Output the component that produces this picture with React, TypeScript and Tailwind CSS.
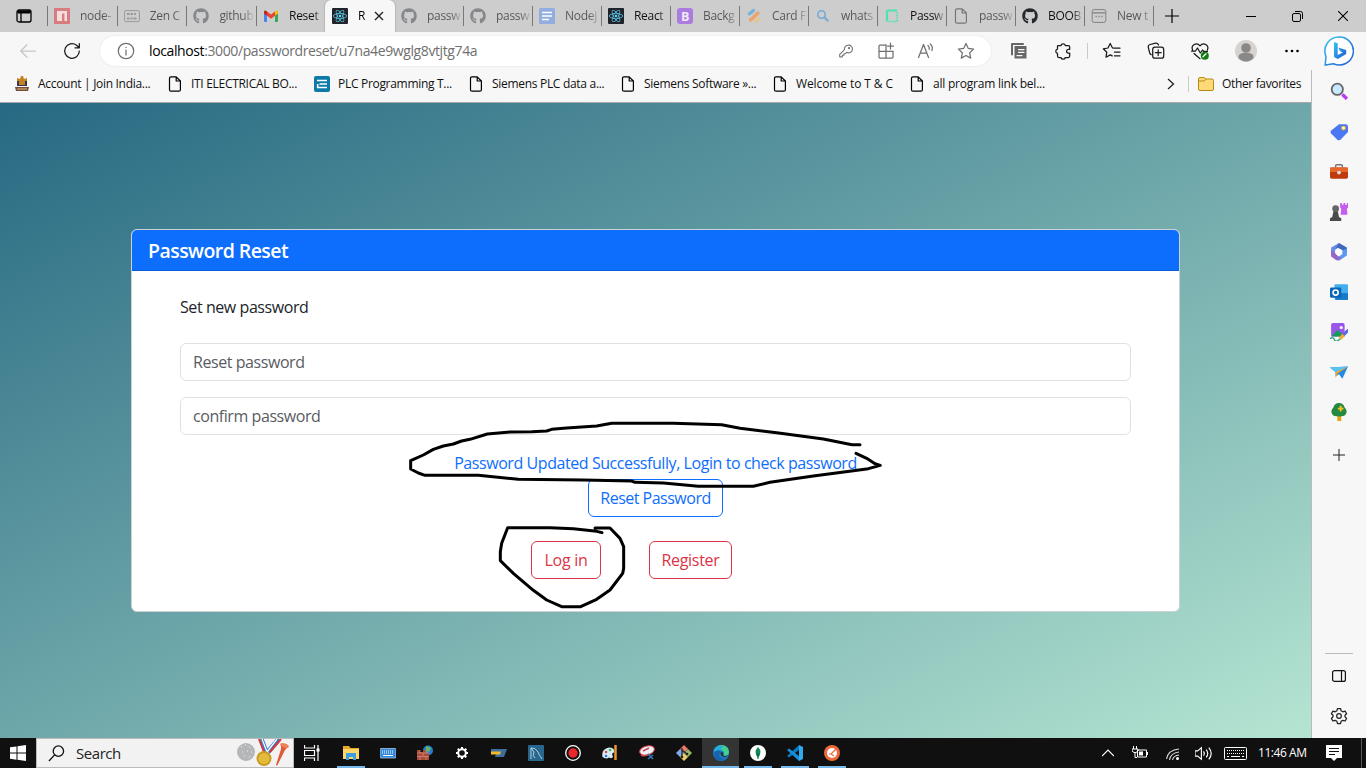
import type { ReactNode } from "react";
import { FaGithub, FaReact } from "react-icons/fa";

type P = { children?: ReactNode; className?: string };

const Line = ({ children, className = "" }: P) => (
  <svg viewBox="0 0 20 20" fill="none" stroke="currentColor" strokeWidth="1.25" strokeLinecap="round" strokeLinejoin="round" className={`h-5 w-5 shrink-0 ${className}`}>
    {children}
  </svg>
);

const Art = ({ children, className = "h-4 w-4" }: P) => (
  <svg viewBox="0 0 16 16" className={`shrink-0 ${className}`}>{children}</svg>
);

const Page = ({ className = "text-black" }: P) => (
  <svg viewBox="0 0 14 16" fill="none" stroke="currentColor" strokeWidth="1.2" strokeLinejoin="round" className={`h-4 w-3.5 shrink-0 ${className}`}>
    <path d="M3 .8h5.2l4.2 4.2v8.7a1.5 1.5 0 0 1-1.5 1.5H3a1.5 1.5 0 0 1-1.5-1.5V2.3A1.5 1.5 0 0 1 3 .8zM8.2.8V5h4.2" />
  </svg>
);

const ReactIcon = () => (
  <span className="flex h-4 w-4 shrink-0 items-center justify-center rounded-[1px] bg-[#20232a] text-[#61dafb]"><FaReact size={14} /></span>
);

const tabs: { t: string; icon: ReactNode; dark?: boolean; active?: boolean }[] = [
  { t: "node-", icon: <Art><path fill="#d77c80" d="M0 0h16v16H0z" /><path fill="#f5dcdd" d="M3 3h10v10h-2.6V5.6H8V13H3z" /></Art> },
  { t: "Zen C", icon: <Art><rect x=".6" y="2.6" width="14.8" height="11" rx="1" fill="none" stroke="#999" /><path d="M3 6h2.500M6.500 6H9M10 6h2M3 10.500h2.500M6.500 10.500h2M9.500 10.500h3" stroke="#999" strokeWidth="2" /></Art> },
  { t: "github", icon: <FaGithub size={16} className="text-[#85878a]" /> },
  { t: "Reset", dark: true, icon: <Art><path fill="#4285f4" d="M1 3.500 4 6v8H2a1 1 0 0 1-1-1z" /><path fill="#34a853" d="m15 3.500-3 2.500v8h2a1 1 0 0 0 1-1z" /><path fill="#ea4335" d="M4 3.400 8 6.500l4-3.100v4.300L8 10.800 4 7.700z" /><path fill="#c5221f" d="M1 4c0-1.700 1.500-2 3-.6v4.300L1 5.500z" /><path fill="#fbbc04" d="M15 4c0-1.700-1.500-2-3-.6v4.300l3-2.200z" /></Art> },
  { t: "R", dark: true, active: true, icon: <ReactIcon /> },
  { t: "passw", icon: <FaGithub size={16} className="text-[#85878a]" /> },
  { t: "passw", icon: <FaGithub size={16} className="text-[#85878a]" /> },
  { t: "Nodej", icon: <Art><rect width="16" height="16" rx="1.500" fill="#92ade0" /><path d="M3 4.500h10M3 8h10M3 11.500h7" stroke="#fff" strokeWidth="1.600" /></Art> },
  { t: "React", dark: true, icon: <ReactIcon /> },
  { t: "Backg", icon: <Art><rect width="16" height="16" rx="3" fill="#ab7be0" /><text x="4" y="12.500" fontSize="12.500" fontWeight="700" fontFamily="Open Sans, sans-serif" fill="#f1e8fb">B</text></Art> },
  { t: "Card F", icon: <Art><g strokeWidth="3.400" strokeLinecap="round"><path d="M3.500 5.800 7.500 2.500" stroke="#75b2e0" /><path d="m4.500 12 7.500-7" stroke="#eda36f" /><path d="m9.500 13.200 2.700-2.500" stroke="#eac58b" /></g></Art> },
  { t: "whats", icon: <Art><circle cx="6.500" cy="6.500" r="3.700" fill="none" stroke="#75a9d4" strokeWidth="1.600" /><path d="m9.300 9.300 4 4" stroke="#75a9d4" strokeWidth="2" /></Art> },
  { t: "Passw", dark: true, icon: <Art><path d="M3 13.500V4q0-1.500 1.500-1.500H13" fill="none" stroke="#4be3b2" strokeWidth="2.200" /><path d="M13.200 4v9.500H4" fill="none" stroke="#4be3b2" strokeWidth="1.600" strokeDasharray="1.600 1" /></Art> },
  { t: "passw", icon: <span className="flex w-4 justify-center"><Page className="text-[#777]" /></span> },
  { t: "BOOB", dark: true, icon: <FaGithub size={16} className="text-[#24292f]" /> },
  { t: "New t", icon: <Art><rect x="1.200" y="1.600" width="13.600" height="12.800" rx="2" fill="none" stroke="#808080" /><path d="M1.500 4.800h13M4.500 8.500h1.300M7.400 8.500h1.300M10.300 8.500h1.300" stroke="#808080" strokeWidth="1.300" /></Art> },
];

function Tab({ t, icon, dark, active }: (typeof tabs)[number]) {
  if (active)
    return (
      <div className="flex h-8 w-[70px] shrink-0 items-center rounded-t-md bg-[#f7f7f7] pl-[7px] shadow-[0_0_2px_#888]">
        {icon}
        <span className="ml-2.5 w-2.5 whitespace-nowrap bg-gradient-to-r from-black from-50% to-[#ddd] bg-clip-text text-xs text-transparent">{t}</span>
        <svg viewBox="0 0 10 10" className="ml-[6px] h-2.5 w-2.5" stroke="#222" strokeWidth="1.400"><path d="m1 1 8 8M9 1 1 9" /></svg>
      </div>
    );
  return (
    <div className="flex h-8 w-[69px] shrink-0 items-center pl-1.5">
      {icon}
      <span className={`ml-2.5 w-9 whitespace-nowrap bg-gradient-to-r from-65% to-[#cdcdcd] bg-clip-text text-xs tracking-[-0.3px] text-transparent ${dark ? "from-[#111]" : "from-[#555]"}`}>{t}</span>
      <span className="ml-auto h-5 w-px shrink-0 bg-[#777]" />
    </div>
  );
}

function TabStrip() {
  return (
    <div className="flex h-8 shrink-0 items-center bg-[#cdcdcd]">
      <div className="flex w-[47px] justify-center">
        <Art><path fill="none" stroke="#000" strokeWidth="1.300" d="M3 2h10a2 2 0 0 1 2 2v8a2 2 0 0 1-2 2H3a2 2 0 0 1-2-2V4a2 2 0 0 1 2-2zM5 5v9" /><path d="M1.500 2.500h13v3h-13z" /></Art>
      </div>
      <span className="h-5 w-px bg-[#777]" />
      <div className="flex w-[277px]">{tabs.slice(0, 4).map((x, i) => <div key={i} className={i < 3 ? "w-[69.700px] [&>div]:w-[69.700px]" : "w-[68px] overflow-hidden"}><Tab {...x} /></div>)}</div>
      <Tab {...tabs[4]} />
      <div className="flex">{tabs.slice(5).map((x, i) => <Tab key={i} {...x} />)}</div>
      <svg viewBox="0 0 14 14" className="ml-[11px] h-3.5 w-3.5" stroke="#000" strokeWidth="1.200"><path d="M7 0v14M0 7h14" /></svg>
      <div className="ml-auto flex">
        <span className="flex w-[46px] items-center justify-center"><svg viewBox="0 0 10 10" className="h-2.5 w-2.5" stroke="#000"><path d="M0 5.500h10" /></svg></span>
        <span className="flex w-[46px] items-center justify-center"><svg viewBox="0 0 11 11" className="h-[11px] w-[11px]" fill="none" stroke="#000"><rect x=".5" y="2.500" width="8" height="8" rx="1.500" /><path d="M3 .5h5.500a2 2 0 0 1 2 2V8" /></svg></span>
        <span className="flex w-[46px] items-center justify-center"><svg viewBox="0 0 10 10" className="h-2.5 w-2.5" stroke="#000" strokeWidth="1.100"><path d="m0 0 10 10M10 0 0 10" /></svg></span>
      </div>
    </div>
  );
}

const Cell = ({ children, className = "w-11" }: P) => <span className={`flex shrink-0 items-center justify-center ${className}`}>{children}</span>;

function Toolbar() {
  return (
    <div className="flex h-[38px] shrink-0 items-center bg-[#f7f7f7] text-[#1a1a1a]">
      <Cell className="w-14"><Line className="text-[#c6c6c6]"><path d="M17.500 10H2.700M9 3.700 2.700 10 9 16.300" /></Line></Cell>
      <Cell className="ml-[-6px] w-11"><Line><path d="M17.300 10A7.300 7.300 0 1 1 14.500 4.200L17 6.500M17.300 2.500v4.300H13" /></Line></Cell>
      <div className="ml-[6px] flex h-[30px] w-[891px] items-center rounded-full bg-white pr-[5px] text-[#707070] shadow-[0_0_2px_#ddd]">
        <Line className="ml-4"><circle cx="10" cy="10" r="7.700" /><path d="M10 9v5M10 6.300v.2" /></Line>
        <span className="ml-[13px] text-sm tracking-[-0.39px] text-[#6f6f6f]"><span className="text-black">localhost</span>:3000/passwordreset/u7na4e9wglg8vtjtg74a</span>
        <div className="ml-auto flex">
          <Cell className="w-10"><Line className="!h-[18px] !w-[18px] text-[#777]"><path d="M12.300 3.500a4.300 4.300 0 1 1-1.500 8L9.300 13H7.700v1.700H6v1.800H3v-2.800l5.300-5.300a4.300 4.300 0 0 1 4-4.900z" /><circle cx="13.400" cy="6.800" r=".7" /></Line></Cell>
          <Cell className="w-10"><Line><path d="M10 4H4a1 1 0 0 0-1 1v11a1 1 0 0 0 1 1h12a1 1 0 0 0 1-1v-6M10 3.500V17M3 10.300h14M14.500 2v6M11.500 5h6" /></Line></Cell>
          <Cell className="w-10"><Line><path d="m2.500 16.500 5-13 5 13M4.200 12h6.600M12 4.500c1.200 1 1.500 2.200 1.200 3.800M14.300 3c2 1.700 2.400 4 1.600 6.500" /></Line></Cell>
          <Cell className="w-10"><Line><path d="m10 2.500 2.300 4.900 5.300.7-3.900 3.700 1 5.300-4.700-2.600-4.700 2.600 1-5.300-3.900-3.700 5.300-.7z" /></Line></Cell>
        </div>
      </div>
      <Cell className="ml-1.5 w-11"><Line className="text-[#666]"><path d="M3 13.500V3h11" strokeWidth="2" /><path d="M5.500 5h12v12.500h-12z" fill="currentColor" stroke="none" /><path d="M9.500 8.500H15M9.500 11.300H15M8 14.500h5" stroke="#f7f7f7" /></Line></Cell>
      <Cell><Line><path d="M5 4.500h3a2.200 2.200 0 0 1 4.300 0h3a1.400 1.400 0 0 1 1.400 1.400v2.400h-1.200a1.900 1.900 0 0 0 0 3.800h1.200v3a1.400 1.400 0 0 1-1.400 1.400h-3a2.200 2.200 0 0 1-4.300 0H5.900a1.400 1.400 0 0 1-1.400-1.400v-2.700a2.200 2.200 0 0 1 0-4.300V5A.5.500 0 0 1 5 4.500z" /></Line></Cell>
      <span className="ml-[2px] mr-[2px] h-4 w-px bg-[#cacaca]" />
      <Cell><Line><path d="M12 7.200 10.500 7 8.200 2.500 6 7l-4.700.8 3.500 3.400-.8 5 4.200-2.300 2 1M11.500 7.200H18M12.500 11H18M12.500 14.800H18" /></Line></Cell>
      <Cell><Line><path d="M5.200 13.700a2.400 2.400 0 0 1-1.500-1.800L2.300 6.500a2.400 2.400 0 0 1 1.800-3l5.500-1.300a2.400 2.400 0 0 1 2.900 1.800" /><rect x="6.700" y="6.200" width="11" height="11" rx="2.300" /><path d="M12.200 8.800v5.800M9.300 11.700h5.800" /></Line></Cell>
      <Cell><Line><path d="M2.600 9C.5 4.400 6.500.4 10 4.800 13.500.4 19.500 4.400 17.400 9M1.500 10h4l2-3 2.800 5L12.500 9l1 1.300h4M4 12.500l6 5.200" /><circle cx="14.800" cy="14.700" r="4" fill="#107c10" stroke="none" /><path d="m13 15.800 3-3" stroke="#fff" /></Line></Cell>
      <Cell className="ml-0.5 w-11"><svg viewBox="0 0 22 22" className="h-[22px] w-[22px]"><circle cx="11" cy="11" r="11" fill="#d5d2cf" /><circle cx="11" cy="8" r="4.800" fill="#8a8886" /><path d="M3.500 18c0-5 3.500-5 7.500-5s7.500 0 7.500 5c-4 4.500-11 4.500-15 0z" fill="#8a8886" /></svg></Cell>
      <Cell className="ml-0.5 w-11"><svg viewBox="0 0 14 4" className="h-1 w-3.5"><circle cx="1.500" cy="2" r="1.300" /><circle cx="7" cy="2" r="1.300" /><circle cx="12.500" cy="2" r="1.300" /></svg></Cell>
      <Cell className="ml-[5px] w-10">
        <svg viewBox="0 0 30 30" className="h-[30px] w-[30px]">
          <defs><linearGradient id="bing" x1="0" y1="0" x2="1" y2="1"><stop stopColor="#2fc5f2" /><stop offset="1" stopColor="#2458d3" /></linearGradient></defs>
          <path d="M15 1a14 14 0 1 1-5.500 26.700L1.200 29l.8-8.500A14 14 0 0 1 15 1z" fill="#fff" stroke="url(#bing)" strokeWidth="1.500" />
          <path d="m10 6 3.700 1.300v11.800l5-2.700-2.800-1.300-1.500-3.700 7.800 2.700v3.800L13.800 23 10 21z" fill="url(#bing)" />
        </svg>
      </Cell>
    </div>
  );
}

const Bookmark = ({ children, icon, w }: { children: ReactNode; icon?: ReactNode; w: string }) => (
  <div className={`flex shrink-0 items-center ${w}`}>
    <span className="flex w-4 justify-center">{icon ?? <Page />}</span>
    <span className="ml-2 whitespace-nowrap">{children}</span>
  </div>
);

function Bookmarks() {
  return (
    <div className="flex h-[33px] shrink-0 items-center border-b border-[#aaa] bg-[#f7f7f7] pb-1 pl-3.5 text-xs tracking-[-0.3px] text-[#111]">
      <Bookmark w="w-[153px]" icon={<Art><path fill="#c1841f" d="M7 0h2l1 3 3-1v4l-2 4H5L3 6V2l3 1z" /><path fill="#3a315e" d="M3 5h2v4h6V5h2v5H3z" /><path fill="#74503a" d="M1 11h14l-1 4H2z" /><path d="M3 13h10" stroke="#e2b46e" /></Art>}>Account | Join India...</Bookmark>
      <Bookmark w="w-[147px]">ITI ELECTRICAL BO...</Bookmark>
      <Bookmark w="w-[154px]" icon={<Art><rect width="16" height="16" rx="2" fill="#0c7ba8" /><path d="M3 4.500h10M5.500 8H13M3 11.500h10M3.700 8v4" stroke="#fff" strokeWidth="1.600" /></Art>}>PLC Programming T...</Bookmark>
      <Bookmark w="w-[152px]">Siemens PLC data a...</Bookmark>
      <Bookmark w="w-[152px]">Siemens Software »...</Bookmark>
      <Bookmark w="w-[137px]"><span className="tracking-[-0.1px]">Welcome to T &amp; C</span></Bookmark>
      <Bookmark w="w-[140px]"><span className="tracking-[-0.22px]">all program link bel...</span></Bookmark>
      <svg viewBox="0 0 8 12" className="ml-auto h-3 w-2" fill="none" stroke="#222" strokeWidth="1.300"><path d="m1 1 5.500 5L1 11" /></svg>
      <span className="ml-[13px] h-4 w-px bg-[#ccc]" />
      <Art className="ml-[9px] h-4 w-4"><path fill="#ffd978" stroke="#b58a17" d="M.5 3A1.500 1.500 0 0 1 2 1.500h4L8 3h6A1.500 1.500 0 0 1 15.500 4.500v8.500a1.500 1.500 0 0 1-1.500 1.500H2A1.500 1.500 0 0 1 .5 13z" /><path d="M1 5h5l2-1.700" fill="none" stroke="#b58a17" /></Art>
      <span className="ml-2 w-[89px] whitespace-nowrap tracking-[-0.35px]">Other favorites</span>
    </div>
  );
}

function Content() {
  return (
    <main className="relative flex flex-1 flex-col items-center bg-[linear-gradient(to_bottom_right,#276982,#b5e5d2)] pt-[126px]">
      <section className="h-[383px] w-[1049px] rounded-md border border-[#cbd3d5] bg-white text-base tracking-[-0.43px] text-[#212529]">
        <h1 className="flex h-[41px] items-center rounded-t-[5px] border-b border-[#0b5ed7] bg-[#0d6efd] px-4 pt-px text-[19.5px] font-semibold tracking-[-0.55px] text-white">Password Reset</h1>
        <div className="flex flex-col px-12 pt-6">
          <p className="h-6 leading-6">Set new password</p>
          <div className="mt-6 flex h-[38px] items-center rounded-md border border-[#dee2e6] px-3 text-[#595c5f]">Reset password</div>
          <div className="mt-4 flex h-[38px] items-center rounded-md border border-[#dee2e6] px-3 text-[#595c5f]">confirm password</div>
          <p className="mt-4 h-6 text-center leading-6 text-[#0d6efd]">Password Updated Successfully, Login to check password</p>
          <button className="mt-1 h-[38px] w-[135px] self-center rounded-md border border-[#0d6efd] tracking-[-0.5px] text-[#0d6efd]">Reset Password</button>
          <div className="ml-[351px] mt-6 flex gap-12 tracking-[-0.3px] text-[#dc3545]">
            <button className="h-[38px] w-[70px] rounded-md border border-[#dc3545]">Log in</button>
            <button className="h-[38px] w-[83px] rounded-md border border-[#dc3545]">Register</button>
          </div>
        </div>
      </section>
      <svg viewBox="0 0 1500 630" className="absolute left-[400px] top-[307px] h-[210px] w-[500px]" fill="none" stroke="#000" strokeWidth="9" strokeLinecap="round" strokeLinejoin="round">
        <path d="M1380 104h-24L1270 87 1130 68 1020 55 965 44 820 40H635L590 48 500 54 455 58 440 63 395 65 330 66 262 72 210 88 185 93 160 102 130 108 100 118 70 135 32 152V177L55 189 75 196H235L355 208 550 210 695 213 705 217 790 219 895 229H1060L1110 217 1240 198 1360 182 1405 176 1441 166 1425 161 1400 145 1368 130" />
        <path d="M606 368 590 364 520 356 450 353H323L305 400 301 425V452L340 490 400 541 440 570 485 590H542L590 568 630 540 668 490 671 475V410L660 385 630 354H585" />
      </svg>
    </main>
  );
}

const sideIcons: ReactNode[] = [
  <><path d="m11 11 4 4" stroke="#b83df0" strokeWidth="3" /><circle cx="6.500" cy="6.500" r="5" fill="#c8e9ff" stroke="#666" strokeWidth="1.600" /></>,
  <><path d="M8 1h6a2 2 0 0 1 2 2v5l-7 7-2 .3L.8 9 .5 7z" fill="#4b76f4" /><circle cx="12" cy="4.500" r="1.600" fill="#fff" stroke="#f6bf27" /></>,
  <><path d="M5 4V2.500Q5 1.500 6 1.500h4q1 0 1 1V4" stroke="#777" strokeWidth="1.300" fill="none" /><rect y="4" width="16" height="10" rx="1.500" fill="#bd3b0d" /><path d="M0 4h16v4H0z" fill="#e5672c" /><circle cx="8" cy="8.500" r="1.700" fill="#ddd" /></>,
  <><path d="M9 0h1.500v1.500H12V0h1.500v1.500H15V0h1v4l-1 1 .5 5.500H9.500L10 5 9 4z" fill="#c65cf0" /><circle cx="5" cy="5" r="3" fill="#666" /><path d="M3 7.500h4l1 5 2 1V16H0v-2.500l2-1z" fill="#4b4b4b" /></>,
  <><path d="M8 0 1 4v7l3.500-2V6L10 2.500z" fill="#688ce9" /><path d="m8 0 7 4v5l-4-2.500L6.500 4 4.500 5.500z" fill="#4268bb" /><path d="M15 5v6l-7 4.800L4.500 14 11 10V6.500z" fill="#5c98f2" /><path d="M1 6v6l5 3.500 4-1.500-3-2.500L4.500 9z" fill="#9867c4" /><circle cx="7.800" cy="8" r="2.700" fill="#fff" /></>,
  <><rect x="4" y="1" width="12" height="14" rx="1" fill="#43adf0" /><path d="M5 9h11v6H5z" fill="#1679c9" /><rect y="4" width="10" height="9" rx="1" fill="#0866b8" /><circle cx="5" cy="8.500" r="2.300" fill="none" stroke="#fff" strokeWidth="1.400" /></>,
  <><rect x="1" width="12" height="12" rx="1.500" fill="#9b55eb" /><path d="m1 12 6-6 6 6z" fill="#16995d" /><circle cx="10" cy="4" r="1.400" fill="#fff" /><path d="m11.500 11 5-5" stroke="#5669ef" strokeWidth="2.600" /><path d="m9 14 3-3.500" stroke="#f3ab2b" strokeWidth="3" /><path d="M0 14q3-2 4 1t5-1" stroke="#27aa7b" strokeWidth="1.300" fill="none" /></>,
  <><path d="m0 4 16-1L11 14 8 10l-3 2V8z" fill="#238be4" /><path d="M0 4 16 3 6 9z" fill="#55c4f3" /><path d="m16 3-9 6-2 4V8z" fill="#f2a326" /></>,
  <><path d="M6.500 11h3.500v5H6.500z" fill="#e5a014" /><path d="M8 0Q12 0 13 4q3 3 1 6-1 2-6 2T2 10Q0 7 3 4 4 0 8 0z" fill="#248a42" /><path d="M9.500 2.500v5M7 5h5" stroke="#ffc11e" strokeWidth="1.700" /></>,
];

function Sidebar() {
  return (
    <aside className="flex w-[55px] shrink-0 flex-col items-center border-l border-[#bbb] bg-[#f7f7f7]">
      {sideIcons.map((x, i) => <Cell key={i} className={i === 0 ? "h-[42px] w-full" : "h-10 w-full"}><svg viewBox="0 0 16 16" className="h-[18px] w-[18px]">{x}</svg></Cell>)}
      <Cell className="mt-[3px] h-10 w-full"><svg viewBox="0 0 12 12" className="h-3 w-3" stroke="#222"><path d="M6 0v12M0 6h12" /></svg></Cell>
      <div className="mt-auto h-px w-7 bg-[#bbb]" />
      <Cell className="mt-0.5 h-10 w-full"><svg viewBox="0 0 14 12" className="h-3 w-3.5" fill="none" stroke="#111" strokeWidth="1.200"><rect x=".6" y=".6" width="12.800" height="10.800" rx="2" /><path d="M9.500 1v10" /></svg></Cell>
      <Cell className="mb-[2px] h-10 w-full">
        <Line className="text-[#222]"><path d="M8.500 2.500h3l.6 2.300 1.700 1 2.300-.7 1.500 2.600L16 9.300v1.500l1.600 1.600-1.500 2.600-2.300-.7-1.700 1-.6 2.200h-3l-.6-2.200-1.700-1-2.300.7-1.500-2.600L4 10.800V9.300L2.400 7.700l1.500-2.600 2.300.7 1.700-1z" /><circle cx="10" cy="10" r="2.300" /></Line>
      </Cell>
    </aside>
  );
}

const apps: ReactNode[] = [
  <><path fill="#e8a92b" d="M0 1h6l1.500 2H16v3H0z" /><path fill="#ffd667" d="M0 4h16v10H0z" /><path fill="#3c9fdf" d="M3 8h10v7h-3v-3H6v3H3z" /></>,
  <><rect y="3.500" width="16" height="9.500" rx="1" fill="#3288d6" stroke="#b9d9f3" strokeWidth=".7" /><path d="M2 6h12M2 8h12" stroke="#fff" strokeDasharray="1 1" /><path d="M3 10.500h10" stroke="#fff" /></>,
  <><circle cx="11" cy="5.500" r="5" fill="#297bd2" /><path d="m9 1 5 2-2 4-3-1z" fill="#63b85c" /><path d="M0 5h3v2h3V5h3v3h3v7H0z" fill="#a94a3a" /><path d="M0 8h12M0 11.500h12M3 5v3M6 8v3M9 5v3M3 11v4M9 11v4" stroke="#e39b86" strokeWidth=".6" /></>,
  <><circle cx="8" cy="8" r="3.800" fill="none" stroke="#fff" strokeWidth="2" /><path d="M8 2v2M8 12v2M2 8h2M12 8h2M3.800 3.800l1.300 1.300M11 11l1.300 1.300M3.800 12.300 5.100 11M11 5.100l1.300-1.300" stroke="#fff" strokeWidth="2" /></>,
  <><path fill="#3e6e99" d="M0 4h16l-3 8H4l1-3H0z" /><path fill="#f6b82c" d="M0 6.500h10l-1 3H0z" /></>,
  <><rect width="16" height="16" rx="1" fill="#28668e" /><path d="M3 14V3q4-1 7 4 1 3 4 7M3 3l3 4q-2 4 1 6" fill="none" stroke="#c3dde9" strokeWidth=".9" /></>,
  <><circle cx="8" cy="8" r="7.300" fill="#111" stroke="#fff" strokeWidth="1.300" /><circle cx="8" cy="8" r="4.700" fill="#e9272c" /></>,
  <><path d="M.5 12Q-1 4 7 2.500q6 0 5 5-3 .5-1 4-1 3-4 1-3 2-6.500-.5z" fill="#d5ebf5" /><circle cx="4" cy="7" r="1.300" fill="#d54d42" /><circle cx="8" cy="5" r="1.300" fill="#4caf50" /><circle cx="4" cy="11" r="1.300" fill="#3076d0" /><path d="M13.500 0v15" stroke="#ec9332" strokeWidth="2.500" /></>,
  <><ellipse cx="8" cy="5.500" rx="7.500" ry="4.500" fill="#edf2f5" stroke="#d34450" transform="rotate(-15 8 5.500)" /><path d="m4 6 6-3M2 10q4 2 8-1" stroke="#d34450" strokeWidth="1.500" fill="none" /><path d="m9 9 5 5M14 10l-5 4" stroke="#2d81bd" strokeWidth="1.500" /></>,
  <><path d="m8 0 4 4-4 4-4-4z" fill="#e77a69" /><path d="m4 4 4 4-4 4-4-4z" fill="#83a7e9" /><path d="m12 4 4 4-4 4-4-4z" fill="#95b867" /><path d="m8 8 4 4-4 4-4-4z" fill="#ead16e" /><path d="M6 3v10M6 5l5 4" stroke="#222" strokeWidth="1.200" /><circle cx="6" cy="12" r="1.300" fill="#222" /><circle cx="11" cy="9" r="1.300" fill="#222" /></>,
  <><circle cx="8" cy="8" r="8" fill="#127ecb" /><path d="M1 5Q4 0 9 0q7 1 7 7 0 4-5 4 1-6-4-6-4 0-6 3z" fill="#42cf91" /><path d="M1 5Q4-1 10 1L7 6Q4 4 1 8z" fill="#29a9dd" /><path d="M1 7q6-4 7 1-3 1-1 4 3 3 6 1-6 6-11 0z" fill="#1763af" /><path d="M8 7q3 0 2 3 1 2 5 0-3 4-6 1-2-1-1-4z" fill="#343434" /></>,
  <><circle cx="8" cy="8" r="8" fill="#fff" /><path d="M8 2q5 5 0 11Q3 7 8 2z" fill="#138756" /><path d="M8 8v6" stroke="#125c41" /></>,
  <><path d="M12 0v5L2 12.500 0 11z" fill="#0878c1" /><path d="M12 16v-5L2 3.500 0 5z" fill="#168edb" /><path d="m12 0 4 2v12l-4 2z" fill="#31a9ed" /></>,
  <><circle cx="8" cy="8" r="8" fill="#ee6939" /><circle cx="8" cy="8" r="5" fill="#fff" /><path d="m7 9 5-5M7 9l3 2M7 9H5" stroke="#ee6939" strokeWidth="1.200" /></>,
];

function Taskbar() {
  return (
    <footer className="flex h-[30px] shrink-0 items-center bg-[#101010] text-white">
      <Cell className="w-9"><Art><path fill="#fff" d="M0 2.300 6.500 1.400v6.200H0zM7.500 1.200 16 0v7.600H7.500zM0 8.500h6.500v6.200L0 13.800zM7.500 8.500H16V16l-8.500-1.200z" /></Art></Cell>
      <div className="flex h-[30px] w-[258px] items-center overflow-hidden border border-[#bbb] bg-[#f2f2f2] text-[#222]">
        <svg viewBox="0 0 18 18" className="ml-[11px] h-[17px] w-[17px]" fill="none" stroke="#111" strokeWidth="1.400"><circle cx="11" cy="6.500" r="5.500" /><path d="m7 10.500-6 6.500" /></svg>
        <span className="ml-[11px] text-[15px] tracking-[-0.45px]">Search</span>
        <svg viewBox="0 0 53 29" className="ml-auto mr-[3px] h-[29px] w-[53px]">
          <circle cx="9" cy="13" r="9" fill="#b4b6ba" /><path d="M4 8h1M8 6h1M12 8h1M5 13h1M10 12h1M14 13h1M7 17h1M12 18h1" stroke="#eee" strokeWidth="1" />
          <path d="m24 0 5 13M42 0 31 13" stroke="#2c75ce" strokeWidth="5" /><path d="m22 0 5 13M44 0 33 13" stroke="#d83b35" strokeWidth="2" /><path d="m25 0 5 13M40 0 30 13" stroke="#fff" strokeWidth="1.300" />
          <circle cx="27" cy="19.500" r="7.500" fill="#c99a20" /><circle cx="27" cy="19.500" r="5.500" fill="#e3bb3a" />
          <path d="m44 5 7 3-3 3-8 16-1-1 5-16z" fill="#df5a35" /><ellipse cx="47.500" cy="6.500" rx="4.500" ry="2" fill="#ed8055" transform="rotate(20 47.500 6.500)" />
        </svg>
      </div>
      <Cell className="mr-[2px] w-9"><Art><path d="M.5 0v3h10V0M.5 16v-3h10v3M.5 5.500h10v5H.5zM14 0v16" fill="none" stroke="#fff" strokeWidth="1.200" /><path fill="#fff" d="M12.500 3.500h3v3h-3z" /></Art></Cell>
      {apps.map((x, i) => (
        <div key={i} className={`flex h-[30px] w-[37px] shrink-0 flex-col items-center justify-between ${i === 10 ? "bg-[#343434]" : ""}`}>
          <span className="h-0.5" />
          <Art>{x}</Art>
          <span className={`h-0.5 ${i === 10 ? "w-full bg-[#76b9ed]" : i === 0 || i > 10 ? "w-7 bg-[#76b9ed]" : ""}`} />
        </div>
      ))}
      <div className="ml-auto flex items-center">
        <Cell className="w-8"><svg viewBox="0 0 12 8" className="h-2 w-3" fill="none" stroke="#fff" strokeWidth="1.200"><path d="m0 7 6-6 6 6" /></svg></Cell>
        <Cell className="w-8"><Art><path d="M5.500 5h9v7h-9zM15.500 7v3M1.500 1v3M4.500 1v3M0 4h6v2L4 7.500H2L0 6zM3 8v4.500h2" fill="none" stroke="#fff" /><path fill="#fff" d="M7 6.500h4v4H7z" /></Art></Cell>
        <Cell className="w-[33px]"><Art><g fill="none" stroke="#ddd" strokeWidth="1.100"><path d="M1.500 14Q3 5 14 4M4.500 15Q5.500 8 14 7M7.500 15q1-4.500 6.500-5" /></g><circle cx="12.500" cy="13.500" r="1.500" fill="#fff" /></Art></Cell>
        <Cell className="-ml-0.5 mr-0.5 w-8"><Art className="h-[17px] w-[17px]"><path d="M0 5.500h2.500L6 2.500v11l-3.500-3H0zM8 6q1.500 2 0 4M10.500 4.300q3 3.700 0 7.400M13 2.500q4.500 5.500 0 11" fill="none" stroke="#fff" strokeWidth="1.100" /></Art></Cell>
        <Cell className="-ml-0.5 mr-0.5 w-8"><svg viewBox="0 0 23 13" className="h-[13px] w-[23px]" fill="none" stroke="#fff"><rect x=".5" y=".5" width="22" height="12" rx="1" /><path d="M3 3.500h17M3 6.500h17" strokeDasharray="1 1" /><path d="M3 9.500h2M7 9.500h9M18 9.500h2" /></svg></Cell>
        <span className="ml-[5px] w-[55px] whitespace-nowrap text-xs tracking-[-0.45px]">11:46 AM</span>
        <Cell className="w-[41px]"><Art><path fill="#fff" d="M0 0h16v13h-5l-3 3-3-3H0z" /><path d="M3 3.500h10M3 6.500h10M3 9.500h6" stroke="#111" /></Art></Cell>
        <span className="ml-[7px] mr-1 h-[30px] w-px bg-[#555]" />
      </div>
    </footer>
  );
}

export default function App() {
  return (
    <div className="flex h-[768px] w-[1366px] flex-col overflow-hidden bg-[#f7f7f7] font-['Open_Sans','Noto_Sans',sans-serif]">
      <TabStrip />
      <Toolbar />
      <div className="flex min-h-0 flex-1">
        <div className="flex w-[1311px] flex-col">
          <Bookmarks />
          <Content />
        </div>
        <Sidebar />
      </div>
      <Taskbar />
    </div>
  );
}
